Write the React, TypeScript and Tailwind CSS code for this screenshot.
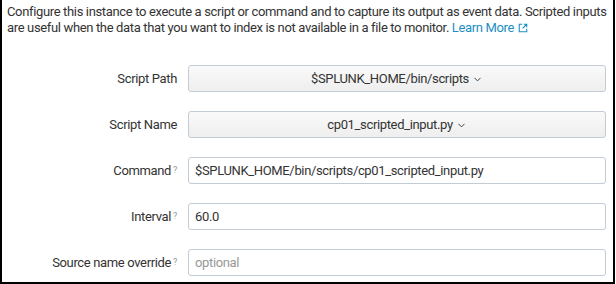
import { ChevronDown } from 'lucide-react';

function Help() {
  return <sup className="ml-[2px] text-[9px] text-[#999] relative -top-[2px]">?</sup>;
}

function Row({ label, help, children }: { label: string; help?: boolean; children: React.ReactNode }) {
  return (
    <div className="flex items-center h-[27px]">
      <div className="w-[175px] shrink-0 text-right text-[13px] text-[#333] whitespace-nowrap">
        {label}
        {help && <Help />}
      </div>
      <div className="ml-[11px] w-[418px]">{children}</div>
    </div>
  );
}

function Select({ value }: { value: string }) {
  return (
    <button className="flex w-full h-[27px] items-center justify-center gap-[3px] rounded-[3px] border border-[#c3cbd4] bg-gradient-to-b from-[#fafafa] to-[#eeeeee] text-[13px] tracking-[-0.35px] text-[#333]">
      {value}
      <ChevronDown className="w-[11px] h-[11px] mt-[1px]" strokeWidth={2} />
    </button>
  );
}

function Input({ value, placeholder }: { value?: string; placeholder?: string }) {
  return (
    <input
      readOnly
      value={value}
      placeholder={placeholder}
      className="w-full h-[27px] rounded-[3px] border border-[#c3cbd4] bg-white px-[6px] text-[13px] tracking-[-0.35px] text-[#333] placeholder:text-[#999] outline-none"
    />
  );
}

export default function App() {
  return (
    <div className="w-[615px] h-[284px] bg-white border-x-2 border-b-2 border-black tracking-[-0.35px]" style={{ fontFamily: 'Roboto, "Liberation Sans", sans-serif' }}>
      <p className="px-[5px] pt-[4px] text-[13px] leading-[16px] text-[#333]">
        Configure this instance to execute a script or command and to capture its output as event data. Scripted inputs
        <br />
        are useful when the data that you want to index is not available in a file to monitor.{' '}
        <a className="text-[#1a8fc4] inline-flex items-center gap-[4px]">
          Learn More
          <svg viewBox="0 0 12 12" className="w-[10px] h-[10px]" fill="none" stroke="currentColor" strokeWidth="1.3">
            <path d="M5 1.5H1.5v9h9V7" />
            <path d="M7 1.5h3.5V5M10.5 1.5 5.5 6.5" />
          </svg>
        </a>
      </p>
      <div className="mt-[29px] flex flex-col gap-[19px]">
        <Row label="Script Path">
          <Select value="$SPLUNK_HOME/bin/scripts" />
        </Row>
        <Row label="Script Name">
          <Select value="cp01_scripted_input.py" />
        </Row>
        <Row label="Command" help>
          <Input value="$SPLUNK_HOME/bin/scripts/cp01_scripted_input.py" />
        </Row>
        <Row label="Interval" help>
          <Input value="60.0" />
        </Row>
        <Row label="Source name override" help>
          <Input placeholder="optional" />
        </Row>
      </div>
    </div>
  );
}
